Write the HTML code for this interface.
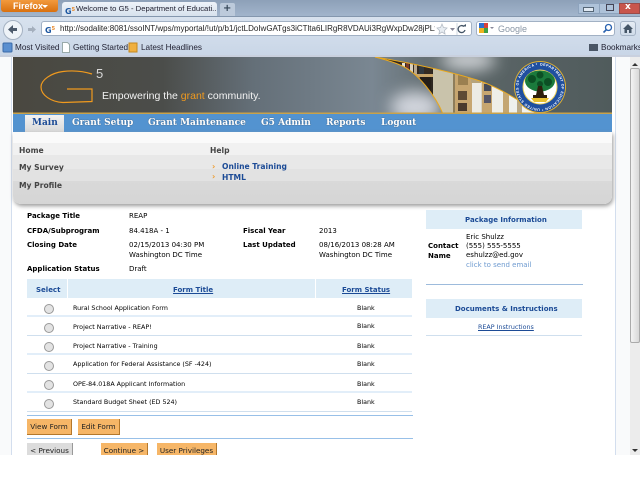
<!DOCTYPE html>
<html><head><meta charset="utf-8"><title>Welcome to G5</title>
<style>
html,body{margin:0;padding:0;width:640px;height:480px;overflow:hidden;background:#fff}
#r{position:relative;width:640px;height:480px;overflow:hidden;font-family:"DejaVu Sans",sans-serif;font-size:7px;color:#000}
#r div,#r span.a,#r svg{position:absolute}
.t{white-space:nowrap;line-height:10px}
.b{font-weight:bold}
.ff{font-family:"Liberation Sans",sans-serif;font-size:8.2px;color:#223}
.m{color:#fff;font-weight:bold;font-family:"DejaVu Serif","Liberation Serif",serif;font-size:9px;white-space:nowrap;line-height:12px;text-shadow:0 0 1px #345}
.lk{color:#1c4b96;font-weight:bold;white-space:nowrap;line-height:10px}
.mn{font-size:7.6px}
.head{background:#deedf7}
.hr{height:1px;left:27px;width:385px;background:#cfdfee}
.th{height:2px;background:#e2eef9}
.btn{background:#f6b667;border-right:1px solid #b4782c;border-bottom:1px solid #b4782c;text-align:center;line-height:15px;font-size:7.200px;height:15px;color:#222;white-space:nowrap}
.rad{width:8px;height:8px;border-radius:50%;background:#e3e3e3;border:1px solid #999;left:44px}
.row{font-size:6.350px}
</style></head><body><div id="r">
<!-- chrome -->
<div style="left:0;top:0;width:640px;height:17px;background:linear-gradient(#8da0b8,#a3b6cd)"></div>
<div style="left:1px;top:0;width:57px;height:12px;background:linear-gradient(#f29a3d,#d9700f);border-radius:0 0 3px 3px"></div>
<div class="t" style="left:13px;top:1px;color:#fff;font-family:'Liberation Sans',sans-serif;font-size:9px;font-weight:bold">Firefox</div>
<div style="left:42px;top:5px;border:3px solid transparent;border-top-color:#fff"></div>
<div style="left:62px;top:2px;width:155px;height:15px;background:linear-gradient(#eef3f9,#d5e0ec);border-radius:3px 3px 0 0"></div>
<div class="t b" style="left:65px;top:5px;color:#1c56a0;font-size:8px">G<span style="color:#e8892a;font-size:5px;vertical-align:3px">5</span></div>
<div class="t ff" style="left:76px;top:4px;width:140px;overflow:hidden;font-size:7.700px">Welcome to G5 - Department of Educati...</div>
<div style="left:220px;top:3px;width:15px;height:13px;background:#bccadb;border-radius:2px 2px 0 0"></div>
<div class="t b" style="left:223px;top:4px;font-size:10px;color:#345">+</div>
<div style="left:578px;top:3px;width:20px;height:9px;background:#aec2d9;border:1px solid #8da3bd"></div>
<div style="left:583px;top:7px;width:9px;height:3px;background:#dfe8f2;border:1px solid #567"></div>
<div style="left:599px;top:3px;width:19px;height:9px;background:#aec2d9;border:1px solid #8da3bd"></div>
<div style="left:606px;top:4px;width:6px;height:5px;border:1px solid #445"></div>
<div style="left:619px;top:3px;width:19px;height:9px;background:#c8554c;border:1px solid #9a4a48"></div>
<div class="t b" style="left:625px;top:2px;color:#fff;font-size:9px">x</div>
<div style="left:0;top:17px;width:640px;height:38px;background:linear-gradient(#d8e2ee,#c9d6e7)"></div>
<div style="left:0;top:16px;width:640px;height:1px;background:#8497ae"></div>
<div style="left:0;top:55px;width:640px;height:2px;background:#c9d0de"></div>
<div style="left:3px;top:20px;width:18px;height:18px;border-radius:50%;background:#eef3f8;border:1px solid #a5b2c2"></div>
<svg style="left:7px;top:24px" width="32" height="12"><path d="M1 5.500L6 1V4H10V7H6V10Z" fill="#4c5a6b"/><path d="M29 5.500L25 2V4H21V7H25V9Z" fill="#a4afbd"/></svg>
<div style="left:41px;top:21px;width:431px;height:15px;background:#fff;border:1px solid #a2b1c4;border-radius:3px;box-sizing:border-box"></div>
<div class="t b" style="left:45px;top:24px;color:#1c56a0;font-size:8px">G<span style="color:#e8892a;font-size:5px;vertical-align:3px">5</span></div>
<div class="t" style="left:60px;top:24px;width:375px;overflow:hidden;font-family:'Liberation Sans',sans-serif;font-size:8px;color:#222">http://sodalite:8081/ssoINT/wps/myportal/!ut/p/b1/jctLDoIwGATgs3iCTlta6LIRgR8VDAUi3RgWxpDw28jPLxzAyOx</div>
<svg style="left:436px;top:23px" width="36" height="12"><path d="M6 1L7.500 4.500L11 5L8.500 7.500L9 11L6 9L3 11L3.500 7.500L1 5L4.500 4.500Z" fill="#e8edf2" stroke="#b5bdc6" stroke-width=".8"/><path d="M14 5h5l-2.500 3z" fill="#889"/><line x1="21" y1="0" x2="21" y2="12" stroke="#d0d8e2"/><path d="M28 3.500A3.500 3.500 0 1 0 29 7" fill="none" stroke="#456" stroke-width="1.300"/><path d="M26 3.500h4V1z" fill="#456"/></svg>
<div style="left:476px;top:21px;width:139px;height:15px;background:#fff;border:1px solid #a2b1c4;border-radius:3px;box-sizing:border-box"></div>
<div style="left:479px;top:23px;width:5px;height:5px;background:#2e6fd0"></div><div style="left:484px;top:23px;width:4px;height:5px;background:#d8423b"></div>
<div style="left:479px;top:28px;width:5px;height:5px;background:#eeb31e"></div><div style="left:484px;top:28px;width:4px;height:5px;background:#3fa045"></div>
<div style="left:490px;top:27px;border:2.500px solid transparent;border-top-color:#889"></div>
<div class="t" style="left:498px;top:24px;color:#8a97a6;font-family:'Liberation Sans',sans-serif;font-size:9px">Google</div>
<svg style="left:602px;top:23px" width="11" height="11"><circle cx="6.500" cy="4.500" r="3" fill="none" stroke="#2a63b0" stroke-width="1.300"/><path d="M4.500 6.500L1.500 9.500" stroke="#2a63b0" stroke-width="1.600"/></svg>
<div style="left:620px;top:21px;width:16px;height:15px;background:linear-gradient(#e6edf5,#cfdbe9);border:1px solid #a5b3c5;border-radius:3px;box-sizing:border-box"></div>
<svg style="left:623px;top:24px" width="10" height="9"><path d="M5 0L10 5H8.500V9H6V6H4V9H1.500V5H0Z" fill="#445566"/></svg>
<svg style="left:2px;top:41px" width="136" height="13"><rect x="1" y="2" width="9" height="9" rx="1" fill="#5a8fd0" stroke="#3a6aa8"/><path d="M60.500 1.500h5l2 2v8h-7z" fill="#fff" stroke="#9aa"/><rect x="127" y="2" width="8" height="9" fill="#f0b040" stroke="#c48820"/></svg>
<div class="t ff" style="left:15px;top:43px">Most Visited</div>
<div class="t ff" style="left:73px;top:43px">Getting Started</div>
<div class="t ff" style="left:141px;top:43px">Latest Headlines</div>
<div style="left:589px;top:44px;width:9px;height:7px;background:#4a5666"></div>
<div class="t ff" style="left:601px;top:43px">Bookmarks</div>

<!-- page -->
<div style="left:0;top:57px;width:630px;height:398px;background:#f9fafb"></div>
<div style="left:11px;top:57px;width:603px;height:398px;background:#fff;border-left:1px solid #d3deee;border-right:1px solid #d3deee"></div>
<!-- scrollbar -->
<div style="left:630px;top:57px;width:10px;height:398px;background:#ececec"></div>
<div style="left:630px;top:68px;width:10px;height:275px;background:linear-gradient(90deg,#f3f3f3,#d8d8d8);border:1px solid #aaa;box-sizing:border-box;border-radius:2px"></div>
<div style="left:632px;top:60px;border:3px solid transparent;border-bottom-color:#333"></div>
<div style="left:632px;top:449px;border:3px solid transparent;border-top-color:#333"></div>
<!-- header -->
<svg style="left:13px;top:57px" width="599" height="57">
<defs>
<linearGradient id="g1" x1="0" x2="1" y1="0" y2="0"><stop offset="0" stop-color="#4a4840"/><stop offset=".25" stop-color="#4b4d4a"/><stop offset=".4" stop-color="#646f78"/><stop offset=".6" stop-color="#7a8792"/><stop offset=".72" stop-color="#5d6769"/><stop offset="1" stop-color="#505b5c"/></linearGradient>
<filter id="bl" x="-50%" y="-50%" width="200%" height="200%"><feGaussianBlur stdDeviation="8"/></filter>
<clipPath id="shelf"><path d="M362 0C385 4 425 11 464 23C480 28 510 44 524 57H430C423 40 405 15 387 8C378 4 370 2 362 0Z"/></clipPath>
<path id="ring" d="M527 8.500A21.500 21.500 0 1 1 526.900 8.500"/>
</defs>
<rect width="599" height="57" fill="url(#g1)"/>
<ellipse cx="403" cy="50" rx="26" ry="16" fill="#e4e6ee" opacity=".85" filter="url(#bl)"/>
<ellipse cx="455" cy="3" rx="28" ry="10" fill="#e8eaee" opacity=".85" filter="url(#bl)"/>
<path d="M362 0C385 4 425 11 464 23C480 28 510 44 524 57H430C423 40 405 15 387 8C378 4 370 2 362 0Z" fill="#d9d5c8"/>
<g clip-path="url(#shelf)">
<rect x="362" y="0" width="58" height="40" fill="#2c2620"/>
<rect x="385" y="4" width="34" height="13" fill="#332a22"/>
<rect x="389" y="6" width="3" height="11" fill="#e8e4d8"/><rect x="393" y="6" width="3" height="11" fill="#7a3a2a"/><rect x="397" y="6" width="3" height="11" fill="#d8d0c0"/><rect x="401" y="6" width="3" height="11" fill="#b8a890"/><rect x="406" y="6" width="5" height="11" fill="#30383f"/>
<rect x="385" y="17" width="36" height="3" fill="#c7a56b"/>
<rect x="400" y="20" width="18" height="18" fill="#241e18"/><rect x="404" y="20" width="3" height="12" fill="#8a6a4a"/>
<rect x="420" y="0" width="20" height="57" fill="#c9c3ab"/>
<rect x="440" y="0" width="2" height="57" fill="#8e7d5a"/>
<rect x="442" y="10" width="17" height="47" fill="#c7a670"/>
<rect x="445" y="18" width="10" height="10" fill="#9b8050"/><rect x="445" y="34" width="9" height="9" fill="#5d4a35"/><rect x="445" y="46" width="9" height="8" fill="#4a3a2d"/>
<rect x="459" y="10" width="9" height="47" fill="#ecebe4"/>
<rect x="458" y="18" width="10" height="8" fill="#b6a47c"/>
<rect x="469" y="20" width="10" height="37" fill="#c7a670"/><rect x="471" y="27" width="7" height="7" fill="#454a58"/><rect x="471" y="38" width="7" height="8" fill="#556"/>
<rect x="479" y="20" width="11" height="37" fill="#eeeee8"/>
<rect x="490" y="30" width="6" height="27" fill="#c4a672"/>
<rect x="496" y="30" width="8" height="27" fill="#eef0ec"/><rect x="504" y="40" width="5" height="17" fill="#b9a987"/><rect x="509" y="40" width="20" height="17" fill="#f2f2ee"/>
</g>
<path d="M362 0C385 4 425 11 464 23C480 28 510 44 524 57" fill="none" stroke="#e8a820" stroke-width="1"/>
<path d="M362 0C370 2 378 4 387 8C405 15 423 40 430 57" fill="none" stroke="#e8a820" stroke-width="1"/>
<circle cx="527" cy="30" r="26" fill="#e0b030"/><circle cx="527" cy="30" r="25" fill="#1f4fa0"/><circle cx="527" cy="30" r="17.500" fill="#f0d35a"/><circle cx="527" cy="30" r="16.500" fill="#fff"/>
<text font-family="Liberation Sans" font-size="3.600" font-weight="bold" fill="#fff"><textPath href="#ring" textLength="132">DEPARTMENT OF EDUCATION * UNITED STATES OF AMERICA *</textPath></text>
<ellipse cx="527" cy="24" rx="15" ry="10.500" fill="#1b7a3c"/><circle cx="519" cy="22" r="4" fill="#0c4f24"/><circle cx="535" cy="25" r="4" fill="#0c4f24"/><circle cx="527" cy="18" r="3.500" fill="#0c4f24"/><circle cx="527" cy="27" r="3" fill="#0c4f24"/>
<path d="M525 29h4l2 9h3v3h-14v-3h3z" fill="#2e1e0c"/><path d="M518 41h18l-3 4h-12z" fill="#e8c030"/>
<path d="M79 17C68 13.500 58 13.500 50 14.500C38 16 28 23 28 30C28 38 38 45 50 45.500L79 44.500V32H54" fill="none" stroke="#f09a1e" stroke-width="1.200"/>
<text x="83" y="21" fill="#d8d8d8" font-family="Liberation Sans" font-size="13">5</text>
<text x="89" y="42" fill="#f2f2f2" font-family="Liberation Sans" font-size="10.500">Empowering the <tspan fill="#f09a1e">grant</tspan> community.</text>
<rect y="55.500" width="599" height="1.500" fill="#c9a24a"/>
</svg>
<!-- nav -->
<div style="left:13px;top:114px;width:599px;height:18px;background:#5393d0"></div>
<div style="left:25px;top:115px;width:39px;height:17px;background:linear-gradient(#f2f2f2,#d9d9d9)"></div>
<div class="m" style="left:32px;top:117px;color:#1c4b96;text-shadow:none">Main</div>
<div class="m" style="left:72px;top:117px">Grant Setup</div>
<div class="m" style="left:148px;top:117px">Grant Maintenance</div>
<div class="m" style="left:261px;top:117px">G5 Admin</div>
<div class="m" style="left:326px;top:117px">Reports</div>
<div class="m" style="left:381px;top:117px">Logout</div>
<!-- menu -->
<div style="left:13px;top:132px;width:599px;height:72px;border-radius:0 0 8px 8px;background:linear-gradient(#fafafa 0,#fafafa 11px,#f1f1f1 11px,#f1f1f1 23px,#e8e8e8 23px,#e8e8e8 37px,#e2e2e2 37px,#e2e2e2 49px,#d9d9d9 49px,#d5d5d5 72px);box-shadow:1px 2px 4px #999"></div>
<div class="t b mn" style="left:19px;top:146px;color:#444">Home</div>
<div class="t b mn" style="left:19px;top:163px;color:#444">My Survey</div>
<div class="t b mn" style="left:19px;top:181px;color:#444">My Profile</div>
<div class="t b mn" style="left:210px;top:146px;color:#444">Help</div>
<div class="t b" style="left:212px;top:162px;color:#ee9a2a;font-size:8px">›</div>
<div class="t b" style="left:212px;top:172px;color:#ee9a2a;font-size:8px">›</div>
<div class="lk mn" style="left:222px;top:162px">Online Training</div>
<div class="lk mn" style="left:222px;top:173px">HTML</div>
<!-- info -->
<div class="t b" style="left:27px;top:211px">Package Title</div><div class="t" style="left:129px;top:211px">REAP</div>
<div class="t b" style="left:27px;top:226px">CFDA/Subprogram</div><div class="t" style="left:129px;top:226px">84.418A - 1</div>
<div class="t b" style="left:243px;top:226px">Fiscal Year</div><div class="t" style="left:319px;top:226px">2013</div>
<div class="t b" style="left:27px;top:240px">Closing Date</div><div class="t" style="left:129px;top:240px">02/15/2013 04:30 PM</div><div class="t" style="left:129px;top:250px">Washington DC Time</div>
<div class="t b" style="left:243px;top:240px">Last Updated</div><div class="t" style="left:319px;top:240px">08/16/2013 08:28 AM</div><div class="t" style="left:319px;top:250px">Washington DC Time</div>
<div class="t b" style="left:27px;top:264px">Application Status</div><div class="t" style="left:129px;top:264px">Draft</div>
<!-- table -->
<div class="head" style="left:27px;top:279px;width:40px;height:19px"></div>
<div class="head" style="left:68px;top:279px;width:247px;height:19px"></div>
<div class="head" style="left:316px;top:279px;width:96px;height:19px"></div>
<div class="lk" style="left:36px;top:285px">Select</div>
<div class="lk" style="left:173px;top:285px;text-decoration:underline">Form Title</div>
<div class="lk" style="left:342px;top:285px;text-decoration:underline">Form Status</div>
<div class="hr th" style="top:315px"></div><div class="hr" style="top:335px"></div><div class="hr th" style="top:353px"></div><div class="hr" style="top:373px"></div><div class="hr th" style="top:391px"></div><div class="hr" style="top:411px"></div>
<div class="rad" style="top:304px"></div><div class="rad" style="top:323px"></div><div class="rad" style="top:342px"></div><div class="rad" style="top:361px"></div><div class="rad" style="top:380px"></div><div class="rad" style="top:399px"></div>
<div style="left:73px;top:304px" class="t row">Rural School Application Form</div>
<div style="left:73px;top:323px" class="t row">Project Narrative - REAP!</div>
<div style="left:73px;top:342px" class="t row">Project Narrative - Training</div>
<div style="left:73px;top:360px" class="t row">Application for Federal Assistance (SF -424)</div>
<div style="left:73px;top:380px" class="t row">OPE-84.018A Applicant Information</div>
<div style="left:73px;top:398px" class="t row">Standard Budget Sheet (ED 524)</div>
<div style="left:357px;top:304px" class="t row">Blank</div>
<div style="left:357px;top:322px" class="t row">Blank</div>
<div style="left:357px;top:342px" class="t row">Blank</div>
<div style="left:357px;top:360px" class="t row">Blank</div>
<div style="left:357px;top:380px" class="t row">Blank</div>
<div style="left:357px;top:398px" class="t row">Blank</div>
<div style="left:27px;top:415px;width:386px;height:1px;background:#98c0e8"></div>
<div style="left:27px;top:438px;width:386px;height:1px;background:#98c0e8"></div>
<div class="btn" style="left:27px;top:419px;width:44px">View Form</div>
<div class="btn" style="left:78px;top:419px;width:41px">Edit Form</div>
<div style="left:0;top:443px;width:630px;height:12px;overflow:hidden">
<div class="btn" style="left:27px;top:0;width:45px;background:#dcdcdc;border-color:#999">&lt; Previous</div>
<div class="btn" style="left:101px;top:0;width:46px">Continue &gt;</div>
<div class="btn" style="left:157px;top:0;width:59px">User Privileges</div>
</div>
<!-- side -->
<div class="head" style="left:426px;top:210px;width:156px;height:19px"></div>
<div class="lk" style="left:465px;top:215px">Package Information</div>
<div class="t b" style="left:428px;top:241px">Contact</div><div class="t b" style="left:428px;top:251px">Name</div>
<div class="t" style="left:466px;top:232px">Eric Shulzz</div>
<div class="t" style="left:466px;top:241px">(555) 555-5555</div>
<div class="t" style="left:466px;top:250px">eshulzz@ed.gov</div>
<div class="t" style="left:466px;top:260px;color:#6f9bd0">click to send email</div>
<div style="left:426px;top:284px;width:157px;height:1px;background:#9dbbdc"></div>
<div class="head" style="left:426px;top:299px;width:156px;height:19px"></div>
<div class="lk" style="left:455px;top:304px">Documents &amp; Instructions</div>
<div class="t row" style="left:478px;top:323px;color:#1c4b96;text-decoration:underline">REAP Instructions</div>
<div style="left:426px;top:335px;width:156px;height:1px;background:#cfdfee"></div>
</div></body></html>
